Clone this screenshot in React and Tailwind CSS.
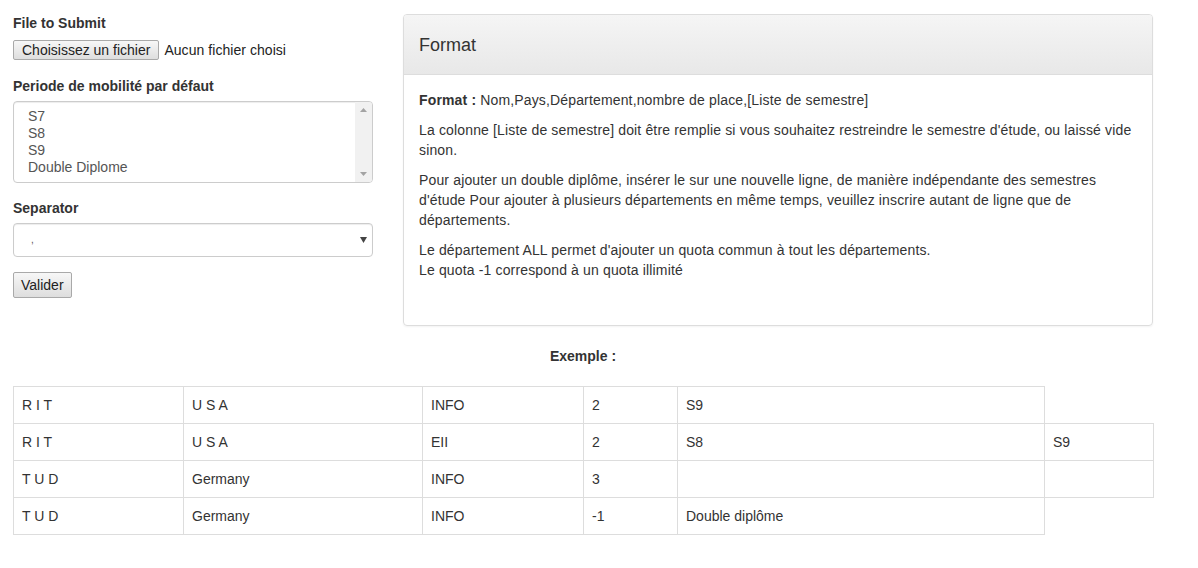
import React from 'react';

const font = { fontFamily: '"Liberation Sans", Arial, sans-serif' };

const rows = [
    ['R I T', 'U S A', 'INFO', '2', 'S9'],
    ['R I T', 'U S A', 'EII', '2', 'S8', 'S9'],
    ['T U D', 'Germany', 'INFO', '3', '', ''],
    ['T U D', 'Germany', 'INFO', '-1', 'Double diplôme'],
];

const widths = [170, 239, 161, 94, 367, 109];

function Caret({ up }) {
    return (
        <svg width="7" height="4" viewBox="0 0 7 4" className="block">
            <path d={up ? 'M0 4 L3.5 0 L7 4 Z' : 'M0 0 L3.5 4 L7 0 Z'} fill="#a3a3a3" />
        </svg>
    );
}

function GrayButton({ children, className }) {
    return (
        <button
            className={
                'border border-[#a9a9a9] rounded-[2px] bg-gradient-to-b from-[#f7f7f7] to-[#dedede] text-[14px] text-[#222] leading-none ' +
                className
            }
        >
            {children}
        </button>
    );
}

export default function App() {
    return (
        <div className="w-[1198px] h-[568px] bg-white text-[#333] text-[14px] leading-[20px]" style={font}>
            <div className="flex pl-[13px] pt-[13px] gap-[30px]">
                {/* formulaire */}
                <div className="w-[360px] flex flex-col">
                    <label className="font-bold">File to Submit</label>
                    <div className="flex items-center mt-[7px] h-[20px]">
                        <GrayButton className="h-[20px] px-[8px]">Choisissez un fichier</GrayButton>
                        <span className="ml-[5px] text-[#222] tracking-[0.05px]">Aucun fichier choisi</span>
                    </div>

                    <label className="font-bold mt-[16px]">Periode de mobilité par défaut</label>
                    <div className="mt-[5px] h-[82px] border border-[#ccc] rounded-[4px] flex shadow-[inset_0_1px_1px_rgba(0,0,0,0.075)] overflow-hidden">
                        <div className="flex-1 pl-[14px] pt-[6px] text-[#555] leading-[17px]">
                            <div>S7</div>
                            <div>S8</div>
                            <div>S9</div>
                            <div>Double Diplome</div>
                        </div>
                        <div className="w-[17px] bg-[#f1f1f1] flex flex-col justify-between items-center py-[6px]">
                            <Caret up />
                            <Caret />
                        </div>
                    </div>

                    <label className="font-bold mt-[15px]">Separator</label>
                    <div className="mt-[5px] h-[34px] border border-[#ccc] rounded-[4px] flex items-center justify-between pl-[17px] pr-[5px] shadow-[inset_0_1px_1px_rgba(0,0,0,0.075)] text-[#555]">
                        <span className="text-[10px]">,</span>
                        <svg width="7" height="6" viewBox="0 0 7 6">
                            <path d="M0 0 L7 0 L3.5 6 Z" fill="#444" />
                        </svg>
                    </div>

                    <div className="mt-[15px]">
                        <GrayButton className="h-[26px] px-[7px]">Valider</GrayButton>
                    </div>
                </div>

                {/* panneau Format */}
                <div className="w-[750px] mt-[1px] border border-[#ddd] rounded-[4px] shadow-[0_1px_2px_rgba(0,0,0,0.05)] overflow-hidden">
                    <div className="h-[60px] border-b border-[#ddd] bg-gradient-to-b from-[#f5f5f5] to-[#e8e8e8] px-[15px] flex items-center">
                        <h3 className="text-[18px] leading-[20px] text-[#333]">Format</h3>
                    </div>
                    <div className="h-[250px] px-[15px] pt-[15px] flex flex-col gap-[10px] tracking-[0.15px]">
                        <p>
                            <b>Format :</b> Nom,Pays,Département,nombre de place,[Liste de semestre]
                        </p>
                        <p>
                            La colonne [Liste de semestre] doit être remplie si vous souhaitez restreindre le semestre d'étude, ou laissé vide sinon.
                        </p>
                        <p>
                            Pour ajouter un double diplôme, insérer le sur une nouvelle ligne, de manière indépendante des semestres d'étude Pour ajouter à plusieurs départements en même temps, veuillez inscrire autant de ligne que de départements.
                        </p>
                        <p>
                            Le département ALL permet d'ajouter un quota commun à tout les départements.
                            <br />
                            Le quota -1 correspond à un quota illimité
                        </p>
                    </div>
                </div>
            </div>

            {/* exemple */}
            <div className="ml-[13px] w-[1140px] mt-[20px]">
                <p className="text-center font-bold">Exemple :</p>
                <table className="mt-[20px] border-collapse table-fixed w-[1140px]">
                    <colgroup>
                        {widths.map((w, i) => (
                            <col key={i} style={{ width: w }} />
                        ))}
                    </colgroup>
                    <tbody>
                        {rows.map((r, i) => (
                            <tr key={i}>
                                {r.map((c, j) => (
                                    <td key={j} className="border border-[#ddd] px-[8px] py-[8px] leading-[20px] h-[37px]">
                                        {c}
                                    </td>
                                ))}
                            </tr>
                        ))}
                    </tbody>
                </table>
            </div>
        </div>
    );
}
